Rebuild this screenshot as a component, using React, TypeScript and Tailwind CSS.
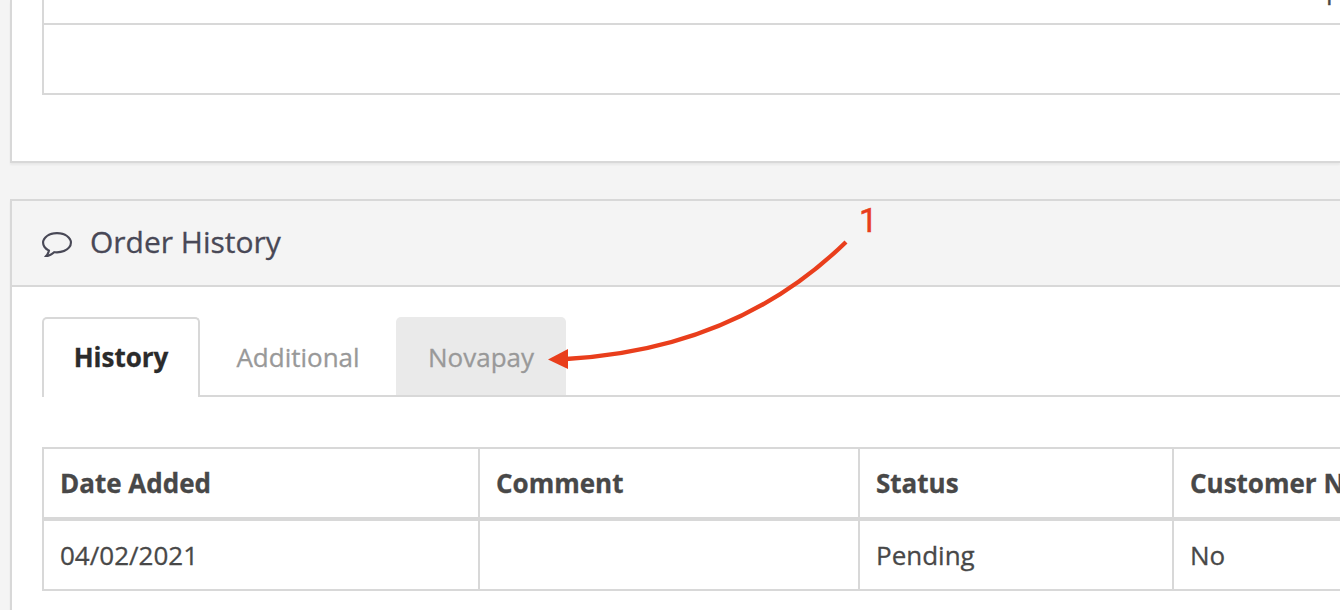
export default function App() {
  return (
    <div className="relative h-[610px] w-[1340px] overflow-hidden bg-[#f4f4f4] pl-[10px] font-['Open_Sans',sans-serif] text-[26px] text-[#484848] [-webkit-text-stroke:0.3px]">
      <section className="h-[163px] border-b-2 border-l-2 border-[#d8d8d8] bg-white pl-[30px] shadow-[0_2px_2px_rgba(0,0,0,0.05)]">
        <div className="h-[95px] border-b-2 border-l-2 border-[#d8d8d8]">
          <div className="relative h-[25px] overflow-hidden border-b-2 border-[#d8d8d8]">
            <span className="absolute left-[1282px] top-[-28px] leading-[35px]">p</span>
          </div>
        </div>
      </section>
      <section className="mt-9 h-[430px] border-l-2 border-t-2 border-[#d8d8d8] bg-white shadow-[0_2px_2px_rgba(0,0,0,0.05)]">
        <header className="flex h-[86px] items-center border-b-2 border-[#d8d8d8] bg-[#f4f4f4] pl-[30px] text-[30px] text-[#484856]">
          <svg className="mr-[18px] mt-[3px] h-[25.7px] w-[30px]" viewBox="0 256 1792 1536" fill="currentColor"><path d="M896 384q-204 0-381.5 69.5t-282 187.5-104.5 255q0 112 71.5 213.5t201.5 175.5l87 50-27 96q-24 91-70 172 152-63 275-171l43-38 57 6q69 8 130 8 204 0 381.5-69.5t282-187.5 104.5-255-104.5-255-282-187.5-381.5-69.5zm896 512q0 174-120 321.5t-326 233-450 85.5q-70 0-145-8-198 175-460 242-49 14-114 22h-5q-15 0-27-10.5t-16-27.5v-1q-3-4-.5-12t2-10 4.5-9.5l6-9 7-8.5 8-9q7-8 31-34.5t34.5-38 31-39.5 32.5-51 27-59 26-76q-157-89-247.5-220t-90.5-281q0-130 71-248.5t191-204.5 286-136.5 348-50.5 348 50.5 286 136.5 191 204.5 71 248.5z" /></svg>
          <h3 className="pb-1">Order History</h3>
        </header>
        <div className="pl-[30px] pt-[30px]">
          <nav className="flex h-20 border-b-2 border-[#d8d8d8]">
            <div className="flex h-20 w-[158px] items-center justify-center rounded-t-[5px] border-2 border-b-0 border-[#d8d8d8] bg-white pb-[2px] font-bold text-[#2b2b2b]">History</div>
            <div className="flex w-[196px] items-center justify-center pt-[2px] text-[#999]">Additional</div>
            <div className="flex w-[170px] items-center justify-center rounded-t-[5px] bg-[#eaeaea] pt-[2px] text-[#999]">Novapay</div>
          </nav>
          <table className="mt-[50px] w-[1500px] table-fixed border-collapse border-2 border-[#d8d8d8] text-left">
            <colgroup><col className="w-[436px]" /><col className="w-[380px]" /><col className="w-[314px]" /><col /></colgroup>
            <thead><tr className="h-[71px] font-bold">
              {["Date Added", "Comment", "Status", "Customer Notified"].map((t) => <th key={t} className="border-2 border-b-4 border-[#d8d8d8] px-4">{t}</th>)}
            </tr></thead>
            <tbody><tr className="h-[71px]">
              {["04/02/2021", "", "Pending", "No"].map((t) => <td key={t} className="border-2 border-[#d8d8d8] px-4">{t}</td>)}
            </tr></tbody>
          </table>
        </div>
      </section>
      <svg className="absolute left-0 top-0 h-[610px] w-[1340px]" viewBox="0 0 1340 610">
        <path d="M846 242C770 316 675 353 566 359" fill="none" stroke="#e93e1c" strokeWidth="4.3" />
        <path d="M548 359.5 568 349V369Z" fill="#e93e1c" />
      </svg>
      <span className="absolute left-[859px] top-[202px] font-['Roboto',sans-serif] text-[33px] leading-[38px] text-[#e93e1c] [-webkit-text-stroke:0.5px]">1</span>
    </div>
  );
}
